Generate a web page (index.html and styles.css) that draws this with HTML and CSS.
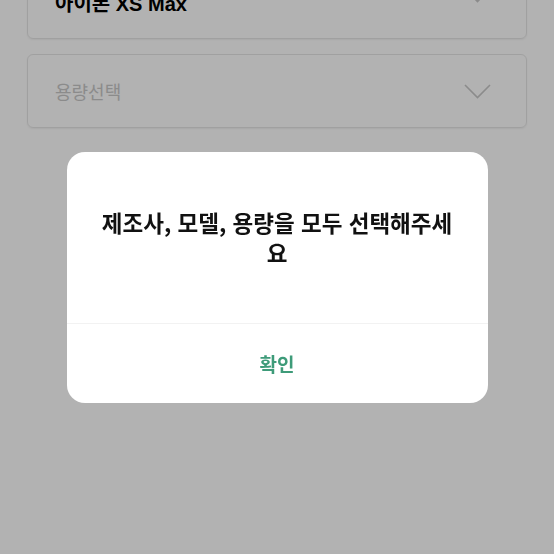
FILE: index.html
```html
<!DOCTYPE html>
<html lang="ko">
<head>
<meta charset="utf-8">
<link rel="stylesheet" href="styles.css">
</head>
<body>
<div class="page">
  <div class="select filled">
    <span class="value">아이폰 XS Max</span>
    <svg class="chev" width="27" height="15" viewBox="0 0 27 15"><path d="M1 1 L13.5 13.5 L26 1" fill="none" stroke="#c8c8c8" stroke-width="1.6"/></svg>
  </div>
  <div class="select">
    <span class="placeholder">용량선택</span>
    <svg class="chev" width="27" height="15" viewBox="0 0 27 15"><path d="M1 1 L13.5 13.5 L26 1" fill="none" stroke="#c8c8c8" stroke-width="1.6"/></svg>
  </div>
</div>
<div class="overlay">
  <div class="dialog">
    <div class="message">제조사, 모델, 용량을 모두 선택해주세요</div>
    <div class="actions"><button class="ok">확인</button></div>
  </div>
</div>
</body>
</html>
```
FILE: styles.css
```css
html, body {
  margin: 0;
  padding: 0;
  background: #ffffff;
  font-family: "Noto Sans CJK KR", "Noto Sans", sans-serif;
  height: 100%;
  overflow: hidden;
}
.page {
  padding: 0 27px;
  margin-top: -35px;
  display: flex;
  flex-direction: column;
  gap: 15px;
}
.select {
  height: 74px;
  box-sizing: border-box;
  border: 1px solid #e6e6e6;
  border-radius: 6px;
  box-shadow: 0 1px 2px rgba(0,0,0,0.06);
  display: flex;
  align-items: center;
  justify-content: space-between;
  padding: 0 35px 0 27px;
}
.value {
  font-family: "Liberation Sans", "Noto Sans CJK KR", sans-serif;
  font-weight: 700;
  font-size: 20px;
  color: #000;
}
.filled .chev { margin-top: -14px; }
.placeholder {
  font-size: 18px;
  color: #c8c8c8;
}
.overlay {
  position: fixed;
  inset: 0;
  background: rgba(0,0,0,0.3);
  display: flex;
  align-items: center;
  justify-content: center;
}
.dialog {
  width: 421px;
  height: 251px;
  background: #fff;
  border-radius: 18px;
  display: flex;
  flex-direction: column;
  overflow: hidden;
}
.message {
  height: 172px;
  box-sizing: border-box;
  padding: 0 30px;
  display: flex;
  align-items: center;
  justify-content: center;
  text-align: center;
  font-size: 22.5px;
  font-weight: 700;
  line-height: 30px;
  color: #111;
  border-bottom: 1px solid #f2f2f2;
}
.actions {
  flex: 1;
  display: flex;
  align-items: center;
  justify-content: center;
}
.ok {
  border: none;
  background: none;
  font-family: "Noto Sans CJK KR", sans-serif;
  font-size: 19px;
  font-weight: 700;
  color: #3e9b79;
  padding: 0;
}
```
